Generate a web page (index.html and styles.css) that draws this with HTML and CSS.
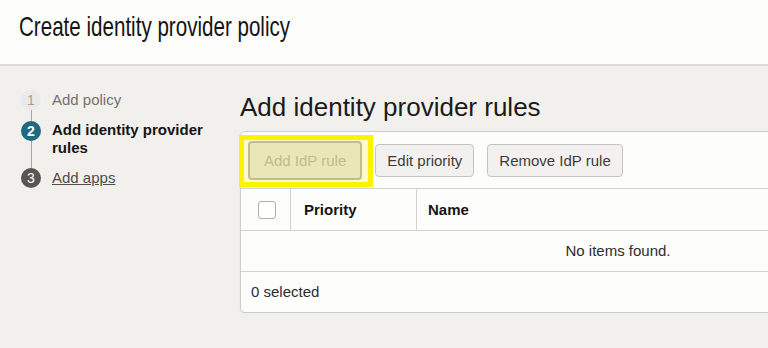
FILE: index.html
```html
<!DOCTYPE html>
<html lang="en">
<head>
  <meta charset="UTF-8" />
  <meta name="viewport" content="width=device-width, initial-scale=1.0"/>
  <title>Create identity provider policy</title>
  <link rel="stylesheet" href="styles.css">
</head>
<body>

  <header class="page-header">
    <h1 class="page-title">Create identity provider policy</h1>
  </header>

  <div class="layout">
    <ol class="steps">
      <li class="step step-done">
        <span class="step-num">1</span>
        <span class="step-label">Add policy</span>
      </li>
      <li class="step step-current">
        <span class="step-num">2</span>
        <span class="step-label">Add identity provider rules</span>
      </li>
      <li class="step step-next">
        <span class="step-num">3</span>
        <a class="step-label" href="#">Add apps</a>
      </li>
    </ol>

    <main class="content">
      <h2 class="section-title">Add identity provider rules</h2>

      <div class="panel">
        <div class="toolbar">
          <button class="btn btn-add" disabled>Add IdP rule</button>
          <button class="btn">Edit priority</button>
          <button class="btn">Remove IdP rule</button>
        </div>

        <div class="grid-head">
          <div class="col col-check"><span class="checkbox"></span></div>
          <div class="col col-priority">Priority</div>
          <div class="col col-name">Name</div>
        </div>

        <div class="grid-empty">No items found.</div>

        <div class="panel-footer">0 selected</div>

        <!-- callout box drawn over the first button -->
        <div class="highlight"></div>
      </div>
    </main>
  </div>

</body>
</html>
```

FILE: styles.css
```css
body {
  font-family: "Liberation Sans", Arial, sans-serif;
  background-color: #f1f0ed;
  color: #161513;
  margin: 0;
  padding: 0;
  overflow: hidden;
}

.page-header {
  background-color: #fcfcfb;
  height: 66px;
  border-bottom: 2px solid #dcdad6;
  box-sizing: border-box;
  padding: 11px 0 0 19px;
}

.page-title {
  margin: 0;
  font-size: 28px;
  font-weight: normal;
  line-height: 32px;
  display: inline-block;
  white-space: nowrap;
  transform: scaleX(0.735);
  transform-origin: left center;
}

.layout {
  display: flex;
  padding-top: 24px;
}

.steps {
  list-style: none;
  margin: 0;
  padding: 0 0 0 21px;
  width: 240px;
  flex: none;
  box-sizing: border-box;
}

.step {
  display: flex;
  align-items: flex-start;
  gap: 11px;
  position: relative;
  margin-bottom: 11px;
  font-size: 15px;
  line-height: 18px;
}

.step::after {
  content: "";
  position: absolute;
  left: 10px;
  top: 20px;
  bottom: -11px;
  width: 1px;
  background-color: #a9a7a4;
}

.step:last-child::after {
  display: none;
}

.step-num {
  width: 20px;
  height: 20px;
  border-radius: 50%;
  flex: none;
  display: flex;
  align-items: center;
  justify-content: center;
  font-size: 14px;
  line-height: 1;
}

.step-label {
  max-width: 165px;
}

.step-done .step-num {
  background-color: #ebeae8;
  color: #a3a19e;
}

.step-done .step-label {
  color: #74716e;
  line-height: 20px;
}

.step-current .step-num {
  background-color: #1f6a83;
  color: #fff;
  font-weight: bold;
}

.step-current .step-label {
  font-weight: bold;
  color: #161513;
}

.step-next .step-num {
  background-color: #5a5551;
  color: #fff;
}

.step-next .step-label {
  color: #4f4c49;
  line-height: 20px;
  text-decoration: underline;
}

.content {
  flex: none;
  padding-top: 2px;
}

.section-title {
  margin: 0 0 9px;
  font-size: 26px;
  font-weight: normal;
  line-height: 30px;
  color: #1d1b19;
}

.panel {
  position: relative;
  width: 754px;
  background-color: #fdfdfc;
  border: 1px solid #cfcdca;
  border-radius: 5px;
  box-shadow: 0 1px 2px rgba(0, 0, 0, 0.08);
}

.toolbar {
  display: flex;
  align-items: center;
  gap: 12px;
  height: 56px;
  padding-left: 7px;
  border-bottom: 1px solid #d3d1ce;
}

.btn {
  font-family: "Liberation Sans", Arial, sans-serif;
  font-size: 15px;
  height: 33px;
  padding: 0 11px;
  background-color: #f2f1ef;
  border: 1px solid #c6c4c1;
  border-radius: 4px;
  color: #3f3d3a;
  cursor: pointer;
}

.btn-add {
  height: 39px;
  padding: 0 14px;
  border: 2px solid #b4b2ad;
  background-color: #e6e4e0;
  color: #b3b1ac;
  cursor: not-allowed;
}

.btn + .btn {
  margin-left: 1px;
}

.grid-head {
  display: flex;
  height: 41px;
  border-bottom: 1px solid #d3d1ce;
  font-size: 15px;
  font-weight: bold;
  line-height: 41px;
}

.col-check {
  width: 49px;
  border-right: 1px solid #d3d1ce;
  display: flex;
  align-items: center;
  justify-content: center;
}

.checkbox {
  width: 16px;
  height: 16px;
  border: 1px solid #b0aeab;
  border-radius: 3px;
  background-color: #fff;
  margin-left: 2px;
}

.col-priority {
  width: 112px;
  padding-left: 13px;
  border-right: 1px solid #d3d1ce;
}

.col-name {
  flex: 1;
  padding-left: 11px;
}

.grid-empty {
  height: 40px;
  line-height: 40px;
  text-align: center;
  font-size: 15px;
  color: #2e2c2a;
  border-bottom: 1px solid #d3d1ce;
}

.panel-footer {
  height: 40px;
  line-height: 40px;
  padding-left: 10px;
  font-size: 15px;
  color: #2e2c2a;
}

.highlight {
  position: absolute;
  left: -2px;
  top: 3px;
  width: 134px;
  height: 52px;
  box-sizing: border-box;
  border: 5px solid #fff200;
  background-color: rgba(255, 236, 0, 0.18);
  pointer-events: none;
}
```
